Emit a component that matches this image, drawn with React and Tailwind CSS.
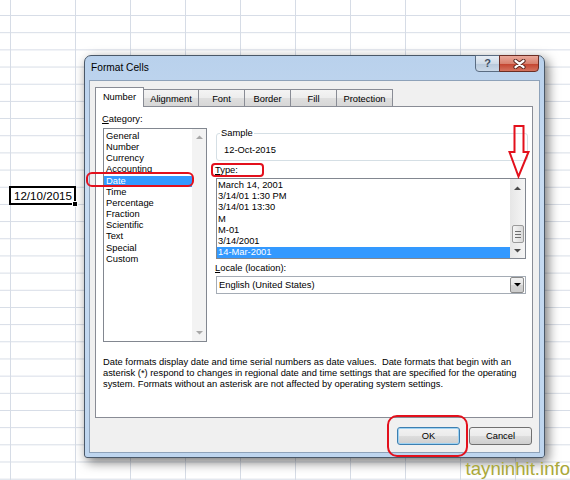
import React from "react";

function Tri({ dir = "up", color = "#4a4a4a" }) {
  return (
    <svg width="7" height="4" viewBox="0 0 7 4" className="block">
      <path d={dir === "up" ? "M0 4L3.5 0.5L7 4Z" : "M0 0L7 0L3.5 3.5Z"} fill={color} />
    </svg>
  );
}

const cats = ["General", "Number", "Currency", "Accounting", "Date", "Time", "Percentage", "Fraction", "Scientific", "Text", "Special", "Custom"];
const types = ["March 14, 2001", "3/14/01 1:30 PM", "3/14/01 13:30", "M", "M-01", "3/14/2001", "14-Mar-2001"];
const tabs = [
  { label: "Alignment", w: "w-[56px]" },
  { label: "Font", w: "w-[47px]" },
  { label: "Border", w: "w-[47px]" },
  { label: "Fill", w: "w-[47px]" },
  { label: "Protection", w: "w-[57px]" },
];

export default function App() {
  return (
    <div className="relative w-[570px] h-[480px] overflow-hidden bg-white font-['Liberation_Sans',Arial,sans-serif] text-black">
      {/* spreadsheet grid */}
      <div className="absolute inset-0 flex bg-[linear-gradient(to_bottom,transparent_16.18px,#d6dce6_16.18px)] bg-[size:100%_17.18px] bg-[position:0_-1.18px]">
        <div className="h-full w-[11px] shrink-0 border-r border-[#d6dce6]" />
        <div className="h-full w-[65px] shrink-0 border-r border-[#d6dce6]" />
        {[0, 1, 2, 3, 4, 5, 6, 7, 8].map((i) => (
          <div key={i} className="h-full w-[55px] shrink-0 border-r border-[#d6dce6]" />
        ))}
      </div>

      {/* active cell */}
      <div className="absolute left-[9px] top-[186px] w-[67px] h-[19px] border-2 border-black bg-white flex items-center justify-end pr-[2px] text-[11.6px] leading-none">
        12/10/2015
        <div className="absolute right-[-4px] bottom-[-4px] w-[6px] h-[6px] bg-black border border-white" />
      </div>

      {/* dialog window */}
      <div className="absolute left-[84px] top-[55px] w-[461px] h-[403px] rounded-t-[7px] rounded-b-[3px] border border-[#4a5868] bg-[linear-gradient(to_bottom,#b9d1ec,#c8dcf2_30%,#bed5ee)] shadow-[3px_4px_12px_rgba(0,0,0,0.55)] flex flex-col">
        {/* title bar */}
        <div className="h-[24px] flex items-start shrink-0">
          <div className="pl-[6px] pt-[6px] text-[10.2px] leading-[12px]">Format Cells</div>
          <div className="ml-auto mr-[5px] -mt-px flex">
            <div className="w-[25px] h-[17px] rounded-bl-[4px] border border-[#5a6c82] bg-[linear-gradient(to_bottom,#e6edf5,#cfdbe8_50%,#b6c7da_50%,#cbd9e8)] flex items-center justify-center text-[11px] leading-none font-bold text-[#3f4f63]">
              ?
            </div>
            <div className="w-[40px] h-[17px] -ml-px rounded-br-[4px] border border-[#6b2e25] bg-[linear-gradient(to_bottom,#eaa99b,#d8826f_50%,#c2412c_50%,#d4735f)] flex items-center justify-center">
              <svg width="13" height="10" viewBox="0 0 13 10">
                <path d="M2.5 1.8L10.5 8.2M10.5 1.8L2.5 8.2" stroke="#5b2a22" strokeWidth="4.2" strokeLinecap="round" />
                <path d="M2.5 1.8L10.5 8.2M10.5 1.8L2.5 8.2" stroke="#fff" strokeWidth="2.3" strokeLinecap="round" />
              </svg>
            </div>
          </div>
        </div>

        {/* client area */}
        <div className="mx-[4px] mb-[4px] flex-1 border border-[#8ea2b9] bg-[#f0f0f0] flex flex-col pl-[5px] pt-[6px] text-[9.35px] leading-[11px]">
          {/* tabs */}
          <div className="flex items-end h-[20px]">
            <div className="relative z-10 w-[49px] h-[20px] bg-white border border-b-0 border-[#898c95] flex items-center justify-center pb-[1px]">
              Number
            </div>
            {tabs.map((t) => (
              <div
                key={t.label}
                className={`${t.w} -ml-px h-[18px] pt-[1px] border border-b-0 border-[#898c95] bg-[linear-gradient(to_bottom,#f4f4f4,#ececec_50%,#dedede_50%,#d6d6d6)] flex items-center justify-center`}
              >
                {t.label}
              </div>
            ))}
          </div>

          {/* tab panel */}
          <div className="-mt-px w-[438px] h-[312px] bg-white border border-[#898c95] flex flex-col">
            <div className="flex">
              {/* category */}
              <div className="ml-[7px] flex flex-col">
                <div className="mt-[7px] -ml-px">
                  <span className="underline">C</span>ategory:
                </div>
                <div className="mt-[3px] w-[104px] h-[214px] border border-[#828790] flex">
                  <div className="flex-1 pt-[2px] flex flex-col leading-[11.15px]">
                    {cats.map((c) => (
                      <div key={c} className={`pl-[2px] ${c === "Date" ? "bg-[#3399ff] text-white" : ""}`}>
                        {c}
                      </div>
                    ))}
                  </div>
                  <div className="w-[14px] bg-[#f3f3f3] flex flex-col items-center justify-between py-[6px]">
                    <Tri dir="up" color="#a8a8a8" />
                    <Tri dir="down" color="#a8a8a8" />
                  </div>
                </div>
              </div>

              {/* right column */}
              <div className="ml-[9px] w-[312px] flex flex-col">
                <div className="mt-[26px] h-[28px] border border-[#d5dfe5] rounded-[3px] relative pl-[7px] pt-[11px]">
                  <div className="absolute left-[3px] top-[-6px] px-[1px] bg-white">Sample</div>
                  12-Oct-2015
                </div>
                <div className="mt-[4px] -ml-px">
                  <span className="underline">T</span>ype:
                </div>
                <div className="mt-[2px] w-[310px] h-[81px] border border-[#828790] flex">
                  <div className="flex-1 pt-[1px] flex flex-col leading-[11.2px]">
                    {types.map((t) => (
                      <div key={t} className={`pl-[1px] ${t === "14-Mar-2001" ? "bg-[#3399ff] text-white" : ""}`}>
                        {t}
                      </div>
                    ))}
                  </div>
                  <div className="w-[15px] bg-[linear-gradient(to_right,#e6e6e6,#f5f5f5)] flex flex-col items-center">
                    <div className="h-[17px] flex items-center">
                      <Tri dir="up" />
                    </div>
                    <div className="flex-1" />
                    <div className="w-[12px] h-[18px] rounded-[2px] border border-[#9b9b9b] bg-[linear-gradient(to_right,#f5f5f5,#dadada)] flex flex-col items-center justify-center gap-[2px]">
                      <div className="w-[6px] h-px bg-[#6f6f6f]" />
                      <div className="w-[6px] h-px bg-[#6f6f6f]" />
                      <div className="w-[6px] h-px bg-[#6f6f6f]" />
                    </div>
                    <div className="h-[15px] flex items-center">
                      <Tri dir="down" />
                    </div>
                  </div>
                </div>
                <div className="mt-[4px] -ml-px">
                  <span className="underline">L</span>ocale (location):
                </div>
                <div className="mt-[2px] w-[310px] h-[18px] border border-[#a5acb5] flex items-center">
                  <div className="flex-1 pl-[2px]">English (United States)</div>
                  <div className="w-[14px] h-[16px] mr-[1px] border border-[#8a8a8a] rounded-[2px] bg-[linear-gradient(to_bottom,#f2f2f2,#e4e4e4_50%,#d4d4d4_50%,#cccccc)] flex items-center justify-center">
                    <Tri dir="down" color="#000" />
                  </div>
                </div>
              </div>
            </div>

            <div className="mt-[15px] ml-[7px] whitespace-pre leading-[10.9px]">
              {"Date formats display date and time serial numbers as date values.  Date formats that begin with an\nasterisk (*) respond to changes in regional date and time settings that are specified for the operating\nsystem. Formats without an asterisk are not affected by operating system settings."}
            </div>
          </div>

          {/* buttons */}
          <div className="mt-[9px] w-[438px] flex justify-end gap-[9px] pr-[1px]">
            <div className="w-[63px] h-[18px] rounded-[3px] border border-[#3c7fb1] shadow-[inset_0_0_0_1px_#9fd2f2] bg-[linear-gradient(to_bottom,#f2f2f2,#ebebeb_50%,#dddddd_50%,#cfcfcf)] flex items-center justify-center">
              OK
            </div>
            <div className="w-[63px] h-[18px] rounded-[3px] border border-[#707070] bg-[linear-gradient(to_bottom,#f2f2f2,#ebebeb_50%,#dddddd_50%,#cfcfcf)] flex items-center justify-center">
              Cancel
            </div>
          </div>
        </div>
      </div>

      {/* red annotations */}
      <div className="absolute left-[86px] top-[172px] w-[108px] h-[15px] rounded-[6px] border-2 border-[#e3101c]" />
      <div className="absolute left-[211px] top-[163px] w-[53px] h-[14px] rounded-[4px] border-2 border-[#e3101c]" />
      <div className="absolute left-[387px] top-[415px] w-[81px] h-[42px] rounded-[10px] border-2 border-[#e3101c]" />
      <svg className="absolute left-[506px] top-[123px]" width="26" height="57" viewBox="0 0 26 57">
        <path d="M8.5 3H17.5V29H22.5L12.5 53.5L3.5 29H8.5Z" fill="none" stroke="#e3101c" strokeWidth="2" strokeLinejoin="miter" />
      </svg>

      {/* watermark */}
      <div className="absolute right-0 bottom-[1px] text-[18.6px] leading-[20px] text-[#aaa83a]">
        tayninhit.info
      </div>
    </div>
  );
}
